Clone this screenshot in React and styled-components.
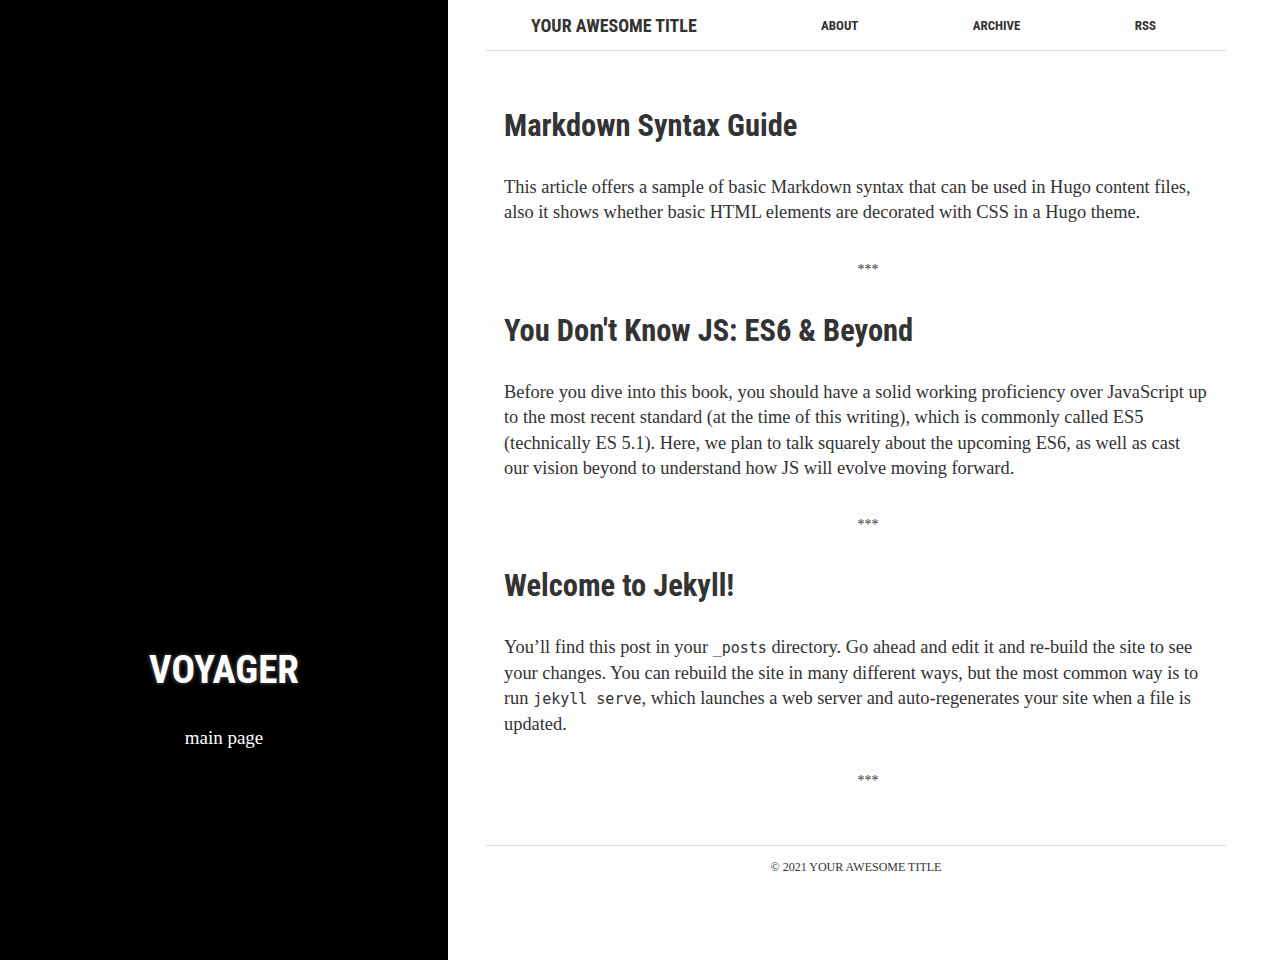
import React from 'react';
import styled, { createGlobalStyle } from 'styled-components';

const GlobalStyle = createGlobalStyle`
    html, body {
        margin:0;
        padding:0;
        background:#fdfdfd;
    }
    body {
        font-family:"Liberation Serif", "DejaVu Serif", serif;
        color:#333;
    }
`

const App = () => {
    const posts = [
        {
            title: "Markdown Syntax Guide",
            body: <>This article offers a sample of basic Markdown syntax that can be used in Hugo content files, also it shows whether basic HTML elements are decorated with CSS in a Hugo theme.</>
        },
        {
            title: "You Don't Know JS: ES6 & Beyond",
            body: <>Before you dive into this book, you should have a solid working proficiency over JavaScript up to the most recent standard (at the time of this writing), which is commonly called ES5 (technically ES 5.1). Here, we plan to talk squarely about the upcoming ES6, as well as cast our vision beyond to understand how JS will evolve moving forward.</>
        },
        {
            title: "Welcome to Jekyll!",
            body: <>You’ll find this post in your <Code>_posts</Code> directory. Go ahead and edit it and re-build the site to see your changes. You can rebuild the site in many different ways, but the most common way is to run <Code>jekyll serve</Code>, which launches a web server and auto-regenerates your site when a file is updated.</>
        },
    ]

    return (
        <Page>
            <GlobalStyle />
            <Side>
                <Brand>VOYAGER</Brand>
                <SideLink href="#">main page</SideLink>
            </Side>

            <Main>
                <Header>
                    <SiteTitle href="#">YOUR AWESOME TITLE</SiteTitle>
                    <Nav>
                        <a href="#">About</a>
                        <a href="#">Archive</a>
                        <a href="#">RSS</a>
                    </Nav>
                </Header>

                <Posts>
                    {
                        posts.map((p, i) => (
                            <Post key={i}>
                                <PostTitle>{p.title}</PostTitle>
                                <Excerpt>{p.body}</Excerpt>
                                <Divider>***</Divider>
                            </Post>
                        ))
                    }
                </Posts>

                <Footer>© 2021 YOUR AWESOME TITLE</Footer>
            </Main>
        </Page>
    );
};

export default App;

const Page = styled.div`
    display:flex;
    min-height:960px;
`
const Side = styled.div`
    width:448px;
    flex-shrink:0;
    background:#000;
    display:flex;
    flex-direction:column;
    align-items:center;
    justify-content:flex-end;
    padding-bottom:209px;
    box-sizing:border-box;
`
const Brand = styled.h1`
    margin:0;
    font-family:"Roboto Condensed", Roboto, sans-serif;
    font-stretch:condensed;
    font-weight:700;
    font-size:39px;
    line-height:46px;
    color:#fff;
    text-shadow:0 0 4px rgba(255,255,255,.4);
`
const SideLink = styled.a`
    margin-top:32px;
    color:#fff;
    text-decoration:none;
    font-size:19px;
    line-height:26px;
`
const Main = styled.div`
    flex:1;
    min-width:0;
    padding:0 54px 0 38px;
    display:flex;
    flex-direction:column;
`
const Header = styled.div`
    height:50px;
    display:flex;
    align-items:center;
    border-bottom:1px solid #ddd;
    padding:0 70px 0 45px;
`
const SiteTitle = styled.a`
    font-family:"Roboto Condensed", Roboto, sans-serif;
    font-stretch:condensed;
    font-weight:700;
    font-size:18px;
    color:#333;
    text-decoration:none;
    width:290px;
    flex-shrink:0;
`
const Nav = styled.div`
    flex:1;
    display:flex;
    justify-content:space-between;
    a{
        font-family:"Roboto Condensed", Roboto, sans-serif;
        font-stretch:condensed;
        font-weight:700;
        font-size:13px;
        text-transform:uppercase;
        color:#333;
        text-decoration:none;
    }
`
const Posts = styled.div`
    padding:57px 18px 0;
`
const Post = styled.div`
    padding-bottom:33px;
`
const PostTitle = styled.h2`
    margin:0;
    font-family:"Roboto Condensed", Roboto, sans-serif;
    font-stretch:condensed;
    font-weight:700;
    font-size:30.5px;
    line-height:36px;
    color:#333;
`
const Excerpt = styled.p`
    margin:31px 0 0;
    font-size:18.4px;
    line-height:25.4px;
    color:#333;
`
const Code = styled.code`
    font-family:"DejaVu Sans Mono", "Liberation Mono", monospace;
    font-size:15px;
    line-height:1;
`
const Divider = styled.div`
    margin-top:34px;
    padding-left:24px;
    text-align:center;
    font-size:14px;
    line-height:20px;
    color:#333;
`
const Footer = styled.div`
    margin-top:21px;
    border-top:1px solid #ddd;
    padding:14px 0 40px;
    text-align:center;
    font-size:12px;
    color:#333;
`
